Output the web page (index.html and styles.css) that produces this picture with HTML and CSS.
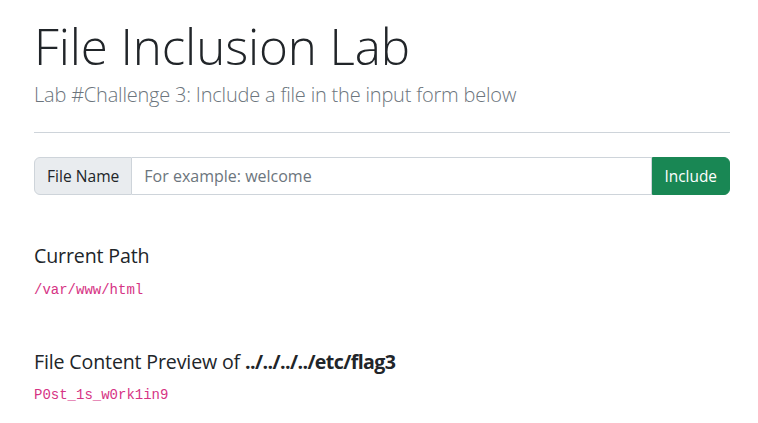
FILE: index.html
```html
<!DOCTYPE html>
<html lang="en">
<head>
<meta charset="utf-8">
<title>File Inclusion Lab</title>
<link rel="stylesheet" href="styles.css">
</head>
<body>
<main class="container">
  <header class="page-head">
    <h1 class="title">File Inclusion Lab</h1>
    <p class="lead">Lab #Challenge 3: Include a file in the input form below</p>
  </header>
  <hr class="divider">
  <form class="input-group">
    <span class="group-label">File Name</span>
    <input class="field" type="text" placeholder="For example: welcome">
    <button class="btn-include" type="button">Include</button>
  </form>
  <section class="block block-path">
    <h5 class="block-title">Current Path</h5>
    <code class="code">/var/www/html</code>
  </section>
  <section class="block block-preview">
    <h5 class="block-title">File Content Preview of <b>../../../../etc/flag3</b></h5>
    <code class="code">P0st_1s_w0rk1in9</code>
  </section>
</main>
</body>
</html>
```

FILE: styles.css
```css
* { box-sizing: border-box; }
html, body { margin: 0; padding: 0; background: #fff; }
body {
  font-family: "Open Sans", "Noto Sans", sans-serif;
  color: #212529;
  font-size: 16px;
}
.container {
  padding: 16px 28px 20px 34px;
}
.page-head { display: flex; flex-direction: column; }
.title {
  margin: 0;
  font-size: 49.3px;
  font-weight: 300;
  line-height: 1.2;
  color: #212529;
  letter-spacing: -0.1px;
}
.lead {
  margin: 5px 0 0;
  font-size: 20px;
  font-weight: 300;
  color: #6c757d;
  line-height: 1.5;
  letter-spacing: -0.2px;
}
.divider {
  margin: 22px 0 24px;
  border: 0;
  border-top: 1px solid #ced4da;
}
.input-group {
  display: flex;
  height: 38px;
  margin: 0;
}
.group-label {
  display: flex;
  align-items: center;
  padding: 0 12px;
  background: #e9ecef;
  border: 1px solid #ced4da;
  border-radius: 6px 0 0 6px;
  font-size: 15.6px;
  color: #212529;
}
.field {
  flex: 1;
  min-width: 0;
  border: 1px solid #ced4da;
  border-left: 0;
  padding: 0 12px;
  font: inherit;
  font-size: 16px;
  color: #212529;
  outline: none;
}
.field::placeholder { color: #6c757d; }
.btn-include {
  border: 1px solid #198754;
  background: #198754;
  color: #fff;
  font: inherit;
  font-size: 15.4px;
  padding: 0 12px;
  border-radius: 0 6px 6px 0;
}
.block { display: flex; flex-direction: column; align-items: flex-start; }
.block-path { margin-top: 49px; }
.block-preview { margin-top: 52px; }
.block-title {
  margin: 0 0 14px;
  font-size: 19.6px;
  font-weight: 400;
  line-height: 1.2;
  letter-spacing: -0.15px;
}
.block-title b { font-weight: 700; letter-spacing: -0.6px; }
.code {
  font-family: "Liberation Mono", monospace;
  font-size: 14px;
  color: #d63384;
}
```
